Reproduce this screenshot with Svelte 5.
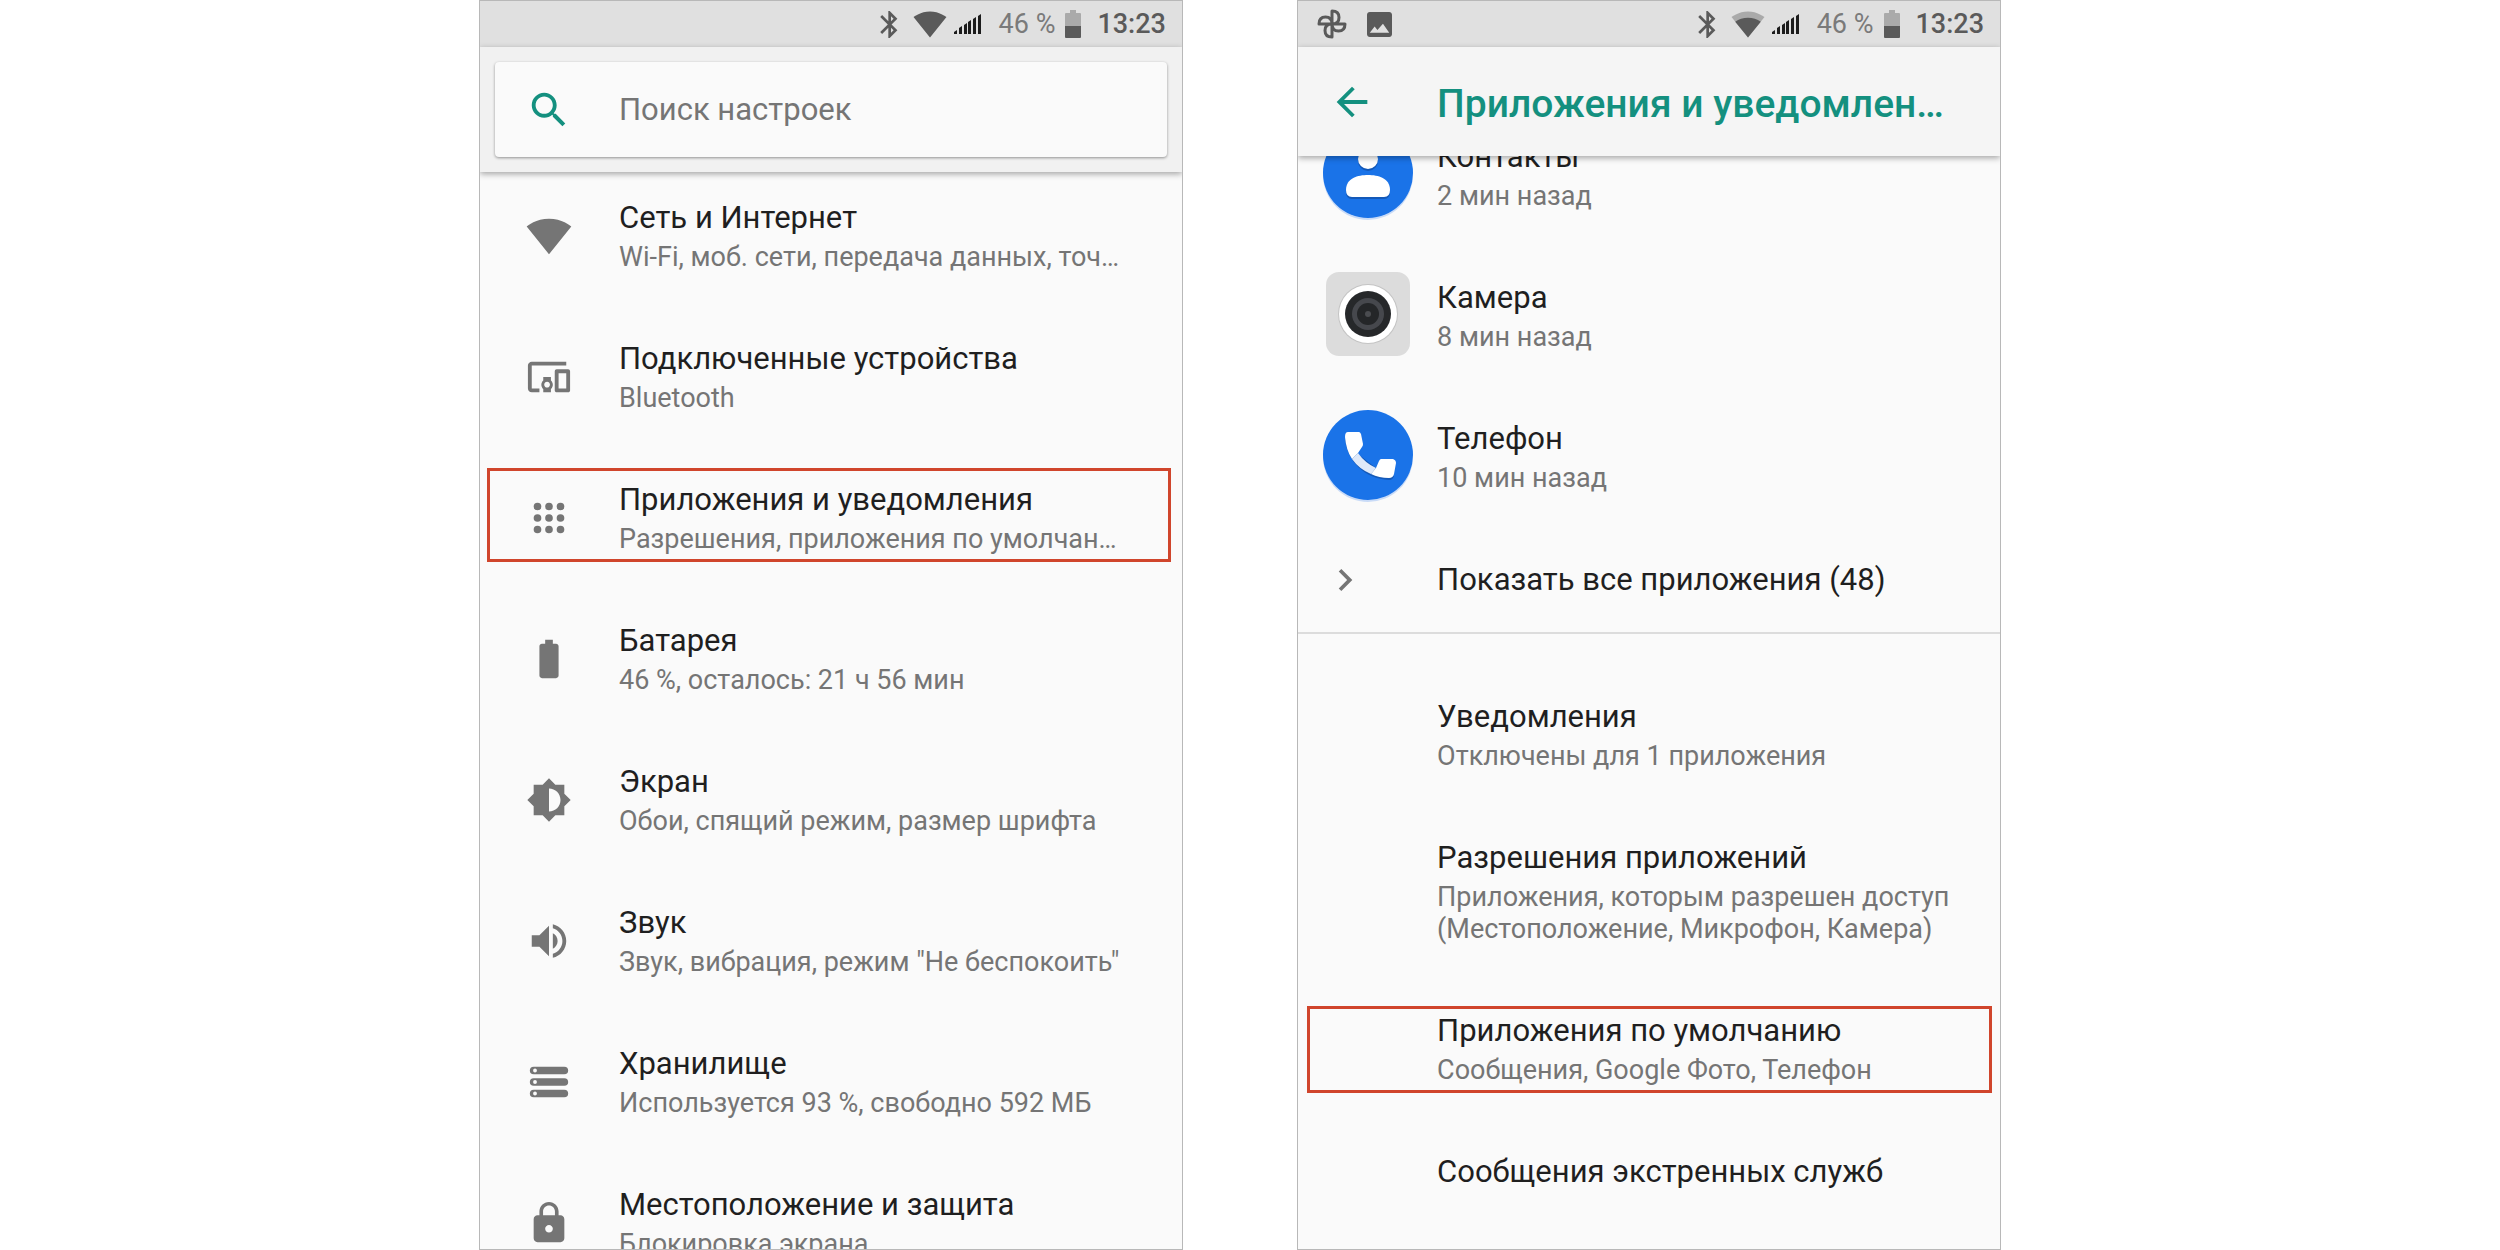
<script lang="ts">
	type Item = {
		title: string;
		note?: string;
		icon?: string;
		marked?: boolean;
	};

	const paths: Record<string, string> = {
		devices:
			'M3 6h18V4H3c-1.1 0-2 .9-2 2v12c0 1.1.9 2 2 2h4v-2H3V6zm10 6H9v1.78c-.61.55-1 1.33-1 2.22s.39 1.67 1 2.22V20h4v-1.78c.61-.55 1-1.34 1-2.22s-.39-1.67-1-2.22V12zm-2 5.5c-.83 0-1.5-.67-1.5-1.5s.67-1.5 1.5-1.5 1.5.67 1.5 1.5-.67 1.5-1.5 1.5zM22 8h-6c-.5 0-1 .5-1 1v10c0 .5.5 1 1 1h6c.5 0 1-.5 1-1V9c0-.5-.5-1-1-1zm-1 10h-4v-8h4v8z',
		wifi: 'M12.01 21.49L23.64 7c-.45-.34-4.93-4-11.64-4C5.28 3 .81 6.66.36 7l11.63 14.49.01.01.01-.01z',
		apps: 'M4 6a2 2 0 1 0 4 0a2 2 0 1 0-4 0M10 6a2 2 0 1 0 4 0a2 2 0 1 0-4 0M16 6a2 2 0 1 0 4 0a2 2 0 1 0-4 0M4 12a2 2 0 1 0 4 0a2 2 0 1 0-4 0M10 12a2 2 0 1 0 4 0a2 2 0 1 0-4 0M16 12a2 2 0 1 0 4 0a2 2 0 1 0-4 0M4 18a2 2 0 1 0 4 0a2 2 0 1 0-4 0M10 18a2 2 0 1 0 4 0a2 2 0 1 0-4 0M16 18a2 2 0 1 0 4 0a2 2 0 1 0-4 0',
		battery:
			'M15.67 4H14V2h-4v2H8.33C7.6 4 7 4.6 7 5.33v15.33C7 21.4 7.6 22 8.33 22h7.33c.74 0 1.34-.6 1.34-1.33V5.33C17 4.6 16.4 4 15.67 4z',
		display:
			'M20 15.31L23.31 12 20 8.69V4h-4.69L12 .69 8.69 4H4v4.69L.69 12 4 15.31V20h4.69L12 23.31 15.31 20H20v-4.69zM12 18V6c3.31 0 6 2.69 6 6s-2.69 6-6 6z',
		sound:
			'M3 9v6h4l5 5V4L7 9H3zm13.5 3c0-1.77-1.02-3.29-2.5-4.03v8.05c1.48-.73 2.5-2.25 2.5-4.02zM14 3.23v2.06c2.89.86 5 3.54 5 6.71s-2.11 5.85-5 6.71v2.06c4.01-.91 7-4.49 7-8.77s-2.99-7.86-7-8.77z',
		storage:
			'M4 4h16a2 2 0 0 1 0 4H4a2 2 0 0 1 0-4zm.7 1a1 1 0 1 0 0 2a1 1 0 1 0 0-2zM4 10h16a2 2 0 0 1 0 4H4a2 2 0 0 1 0-4zm.7 1a1 1 0 1 0 0 2a1 1 0 1 0 0-2zM4 16h16a2 2 0 0 1 0 4H4a2 2 0 0 1 0-4zm.7 1a1 1 0 1 0 0 2a1 1 0 1 0 0-2z',
		lock: 'M18 8h-1V6c0-2.76-2.24-5-5-5S7 3.24 7 6v2H6c-1.1 0-2 .9-2 2v10c0 1.1.9 2 2 2h12c1.1 0 2-.9 2-2V10c0-1.1-.9-2-2-2zm-6 9c-1.1 0-2-.9-2-2s.9-2 2-2 2 .9 2 2-.9 2-2 2zm3.1-9H8.9V6c0-1.71 1.39-3.1 3.1-3.1 1.71 0 3.1 1.39 3.1 3.1v2z'
	};

	const settings: Item[] = [
		{ title: 'Сеть и Интернет', note: 'Wi-Fi, моб. сети, передача данных, точ…', icon: 'wifi' },
		{ title: 'Подключенные устройства', note: 'Bluetooth', icon: 'devices' },
		{ title: 'Приложения и уведомления', note: 'Разрешения, приложения по умолчан…', icon: 'apps', marked: true },
		{ title: 'Батарея', note: '46 %, осталось: 21 ч 56 мин', icon: 'battery' },
		{ title: 'Экран', note: 'Обои, спящий режим, размер шрифта', icon: 'display' },
		{ title: 'Звук', note: 'Звук, вибрация, режим "Не беспокоить"', icon: 'sound' },
		{ title: 'Хранилище', note: 'Используется 93 %, свободно 592 МБ', icon: 'storage' },
		{ title: 'Местоположение и защита', note: 'Блокировка экрана', icon: 'lock' }
	];

	const recent: Item[] = [
		{ title: 'Контакты', note: '2 мин назад', icon: 'contacts' },
		{ title: 'Камера', note: '8 мин назад', icon: 'camera' },
		{ title: 'Телефон', note: '10 мин назад', icon: 'phone' }
	];

	const options: Item[] = [
		{ title: 'Уведомления', note: 'Отключены для 1 приложения' },
		{ title: 'Разрешения приложений', note: 'Приложения, которым разрешен доступ (Местоположение, Микрофон, Камера)' },
		{ title: 'Приложения по умолчанию', note: 'Сообщения, Google Фото, Телефон', marked: true },
		{ title: 'Сообщения экстренных служб' }
	];

	let query = $state('');
</script>

{#snippet statusIcons(weakWifi: boolean)}
	<svg class="bt" viewBox="5 2 13 20" aria-hidden="true">
		<path d="M17.71 7.71L12 2h-1v7.59L6.41 5 5 6.41 10.59 12 5 17.59 6.41 19 11 14.41V22h1l5.71-5.71-4.3-4.29 4.3-4.29zM13 5.83l1.88 1.88L13 9.59V5.83zm1.88 10.46L13 18.17v-3.76l1.88 1.88z" />
	</svg>
	<svg class="wifi" viewBox="0 3 24 18.5" aria-hidden="true">
		{#if weakWifi}
			<path opacity="0.4" d={paths.wifi} />
			<path d="M12 21.5L21 10.3C18.5 8.4 15.4 7.4 12 7.4S5.5 8.4 3 10.3z" />
		{:else}
			<path d={paths.wifi} />
		{/if}
	</svg>
	<svg class="signal" viewBox="0 0 27 20" aria-hidden="true">
		<path d="M0 20v-2l3-2v4zM5 20v-6l3-2v8zM10 20v-9l3-2v11zM14 20v-12l3-2v14zM19 20v-15l3-2v17zM24 20V2l3-2v20z" />
	</svg>
	<span class="percent">46 %</span>
	<svg class="charge" viewBox="0 0 16 28" aria-hidden="true">
		<path opacity="0.4" d="M5 0h6v3h4q1 0 1 1v12H0V4q0-1 1-1h4z" />
		<path d="M0 16h16v11q0 1-1 1H1q-1 0-1-1z" />
	</svg>
	<span class="clock">13:23</span>
{/snippet}

{#snippet appIcon(name: string)}
	<svg class="app-icon" viewBox="0 0 96 96" aria-hidden="true">
		{#if name === 'camera'}
			<rect x="6" y="4" width="84" height="84" rx="13" fill="#dcdcdc" />
			<circle cx="48" cy="46" r="30" fill="#c4c4c4" />
			<circle cx="48" cy="46" r="29" fill="#fff" />
			<circle cx="48" cy="46" r="23" fill="#26282a" />
			<circle cx="48" cy="46" r="16" fill="#46484d" />
			<circle cx="48" cy="46" r="11" fill="#242628" />
			<circle cx="48" cy="46" r="3" fill="#4a4c50" />
		{:else}
			<circle cx="48" cy="48" r="45" fill="#c9dbf7" />
			<circle cx="48" cy="46" r="45" fill="#1a73e8" />
			{#if name === 'contacts'}
				<circle cx="48" cy="34" r="10" fill="#1459b8" />
				<circle cx="48" cy="32" r="10" fill="#fff" />
				<path d="M26 65c0-12 12-16 22-16s22 4 22 16q0 7-6 7H32q-6 0-6-7z" fill="#1459b8" />
				<path d="M26 63c0-12 12-15 22-15s22 3 22 15q0 7-6 7H32q-6 0-6-7z" fill="#fff" />
			{:else}
				<path d="M25 30C27 52 45 70 69 71q4 0 5-4l-18-8-18-14z" fill="#1459b8" />
				<path d="M38 44q7 10 18 15l-5 6q-12-5-19-15z" fill="#dfe9f9" />
				<path d="M28 23h11q1 0 2 2l2 10q0 2-1 3l-4 6-6 6q-6-9-7-22 0-5 3-5z" fill="#fff" />
				<path d="M61 50h12q3 1 3 4l-2 11q-1 4-5 4-10 0-18-4l5-6 3-7q1-2 2-2z" fill="#fff" />
			{/if}
		{/if}
	</svg>
{/snippet}

{#snippet labels(item: Item)}
	<span class="labels">
		<span class="title">{item.title}</span>
		{#if item.note}
			<span class="note">{item.note}</span>
		{/if}
	</span>
{/snippet}

<main class="page">
	<section class="phone settings">
		<div class="status">
			{@render statusIcons(false)}
		</div>
		<header class="search-bar">
			<label class="search">
				<svg class="icon" viewBox="0 0 24 24" aria-hidden="true">
					<path d="M15.5 14h-.79l-.28-.27C15.41 12.59 16 11.11 16 9.5 16 5.91 13.09 3 9.5 3S3 5.91 3 9.5 5.91 16 9.5 16c1.61 0 3.09-.59 4.23-1.57l.27.28v.79l5 4.99L20.49 19l-4.99-5zm-6 0C7.01 14 5 11.99 5 9.5S7.01 5 9.5 5 14 7.01 14 9.5 11.99 14 9.5 14z" />
				</svg>
				<input type="text" placeholder="Поиск настроек" aria-label="Поиск настроек" bind:value={query} />
			</label>
		</header>
		<ul class="list">
			{#each settings as item (item.title)}
				<li>
					<a href="#settings" class="row" class:marked={item.marked}>
						<span class="lead">
							<svg class="icon" viewBox="0 0 24 24" aria-hidden="true">
								<path fill-rule="evenodd" d={paths[item.icon ?? '']} />
							</svg>
						</span>
						{@render labels(item)}
					</a>
				</li>
			{/each}
		</ul>
	</section>

	<section class="phone apps">
		<div class="status">
			<svg class="photos" viewBox="0 0 30 30" aria-hidden="true">
				<path d="M15 15V2c5 0 7 3 7 6.500s-2 6.500-7 6.500zM15 15h13c0 5-3 7-6.500 7s-6.500-2-6.500-7zM15 15v13c-5 0-7-3-7-6.500s2-6.500 7-6.500zM15 15H2c0-5 3-7 6.500-7s6.500 2 6.500 7z" />
			</svg>
			<svg class="picture" viewBox="3 3 18 18" aria-hidden="true">
				<path d="M21 19V5c0-1.1-.9-2-2-2H5c-1.1 0-2 .9-2 2v14c0 1.1.9 2 2 2h14c1.1 0 2-.9 2-2zM8.500 13.500l2 2.500 4-4.500 4.500 6.500H5z" />
			</svg>
			<span class="spacer"></span>
			{@render statusIcons(true)}
		</div>
		<header class="toolbar">
			<button class="back" aria-label="Назад">
				<svg class="icon" viewBox="0 0 24 24" aria-hidden="true">
					<path d="M20 11H7.83l5.59-5.59L12 4l-8 8 8 8 1.41-1.41L7.83 13H20v-2z" />
				</svg>
			</button>
			<h1>Приложения и уведомлен…</h1>
		</header>
		<ul class="list recent">
			{#each recent as item (item.title)}
				<li>
					<a href="#app" class="row">
						<span class="lead">{@render appIcon(item.icon ?? '')}</span>
						{@render labels(item)}
					</a>
				</li>
			{/each}
			<li>
				<a href="#all" class="row more">
					<span class="lead">
						<svg class="chevron" viewBox="0 0 24 24" aria-hidden="true">
							<path d="M10 6L8.59 7.41 13.17 12l-4.58 4.59L10 18l6-6z" />
						</svg>
					</span>
					<span class="labels"><span class="title">Показать все приложения (48)</span></span>
				</a>
			</li>
		</ul>
		<ul class="list options">
			{#each options as item (item.title)}
				<li>
					<a href="#option" class="row" class:marked={item.marked}>
						<span class="lead"></span>
						{@render labels(item)}
					</a>
				</li>
			{/each}
		</ul>
	</section>
</main>

<style>
	:global(body) {
		background: #fff;
	}

	.page {
		--accent: #14907f;
		--fg: #1f1f1f;
		--fg-muted: #757575;
		--status-fg: #5a5a5a;
		--line: #b8b8b8;
		--mark: #d0452c;
		display: grid;
		grid-template-columns: minmax(0, 1fr) minmax(0, 1fr);
		column-gap: 7.5%;
		padding: 0 19.96% 0 19.16%;
		height: 100vh;
		box-sizing: border-box;
		font-family: Roboto, 'Noto Sans', sans-serif;
		font-size: 31px;
		color: var(--fg);
	}

	.phone {
		display: flex;
		flex-direction: column;
		min-height: 0;
		overflow: hidden;
		box-sizing: border-box;
		border: 1px solid var(--line);
		background: #fafafa;
	}

	.phone > * {
		flex: none;
	}

	.status {
		position: relative;
		z-index: 1;
		display: flex;
		align-items: center;
		justify-content: flex-end;
		height: 46px;
		padding: 0 16px 0 19px;
		background: #e0e0e0;
		color: var(--status-fg);
		font-size: 27px;
		line-height: 48px;
	}

	svg {
		display: block;
		flex: none;
		fill: currentColor;
	}

	.bt {
		width: 18px;
		height: 27px;
		margin-right: 15px;
	}

	.wifi {
		width: 34px;
		height: 27px;
		margin-right: 7px;
	}

	.signal {
		width: 27px;
		height: 20px;
		margin-right: 18px;
		color: #1c1c1c;
	}

	.percent {
		margin-right: 10px;
		color: #7a7a7a;
	}

	.charge {
		width: 16px;
		height: 28px;
		margin-right: 16px;
	}

	.clock {
		font-weight: 500;
	}

	.photos {
		width: 30px;
		height: 30px;
		margin-right: 20px;
		fill: none;
		stroke: currentColor;
		stroke-width: 3;
		stroke-linejoin: round;
	}

	.picture {
		width: 25px;
		height: 25px;
	}

	.spacer {
		flex: 1;
	}

	.icon {
		width: 46px;
		height: 46px;
	}

	.search-bar,
	.toolbar {
		position: relative;
		z-index: 1;
		box-shadow: 0 2px 6px rgba(0, 0, 0, 0.35);
	}

	.search-bar {
		padding: 15px;
		background: #f1f1f1;
	}

	.search {
		display: flex;
		align-items: center;
		gap: 47px;
		height: 95px;
		padding: 0 31px;
		border-radius: 4px;
		background: #fafafa;
		box-shadow: 0 1px 3px rgba(0, 0, 0, 0.4);
		color: var(--accent);
	}

	.search input {
		flex: 1;
		min-width: 0;
		padding: 0;
		border: none;
		outline: none;
		background: none;
		font: inherit;
		color: var(--fg);
	}

	.search input::placeholder {
		color: var(--fg-muted);
		opacity: 1;
	}

	.toolbar {
		display: flex;
		align-items: center;
		height: 109px;
		background: #f5f5f5;
		color: var(--accent);
	}

	.back {
		width: 139px;
		padding: 0 0 0 31px;
		border: none;
		background: none;
		color: inherit;
		cursor: pointer;
	}

	h1 {
		margin: 0;
		padding-top: 4px;
		font-size: 39px;
		font-weight: 500;
		white-space: nowrap;
	}

	.list {
		margin: 0;
		padding: 0;
		list-style: none;
	}

	.row {
		position: relative;
		display: flex;
		align-items: center;
		padding: 34px 24px 33px 0;
		color: inherit;
		text-decoration: none;
	}

	.settings .list {
		margin-top: -7px;
	}

	.lead {
		display: flex;
		align-items: center;
		justify-content: center;
		flex: none;
		width: 139px;
		height: 0;
		color: #757575;
	}

	.settings .lead {
		width: 138px;
		padding-right: 1px;
	}

	.labels {
		display: flex;
		flex-direction: column;
		gap: 4px;
		min-width: 0;
	}

	.title {
		line-height: 38px;
	}

	.note {
		font-size: 27px;
		line-height: 32px;
		color: var(--fg-muted);
	}

	.settings .note {
		white-space: nowrap;
	}

	.app-icon {
		width: 96px;
		height: 96px;
	}

	.recent {
		margin-top: -52px;
		border-bottom: 2px solid #dcdcdc;
	}

	.more .lead {
		justify-content: flex-start;
		padding-left: 25px;
		box-sizing: border-box;
	}

	.chevron {
		width: 44px;
		height: 44px;
	}

	.options {
		margin-top: 30px;
	}

	/* frame drawn over the row that the reader should tap */
	.marked::after {
		content: '';
		position: absolute;
		inset: 21px 11px 26px 7px;
		border: 3px solid var(--mark);
	}

	.options .marked::after {
		inset: 28px 8px 26px 9px;
	}
</style>
